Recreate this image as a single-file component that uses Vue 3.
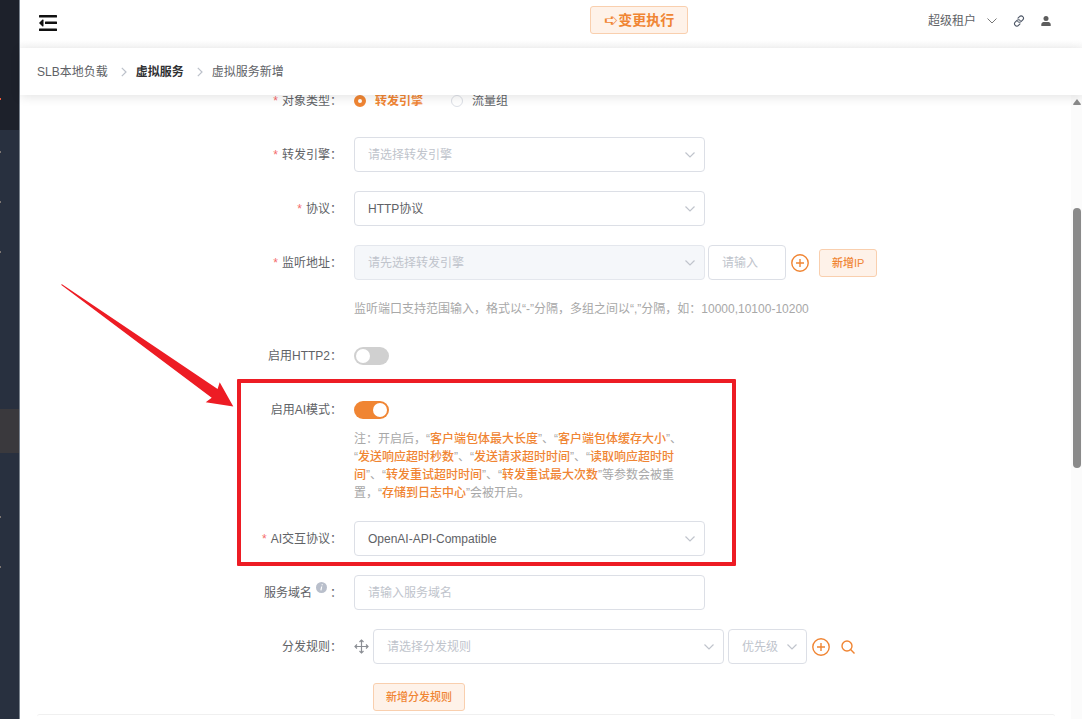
<script setup>
import { ref } from 'vue'

const objectType = ref('engine')
const engine = ref('')
const protocol = ref('HTTP')
const address = ref('')
const port = ref('')
const http2 = ref(false)
const aiMode = ref(true)
const aiProtocol = ref('openai')
const domain = ref('')
const rule = ref('')
const priority = ref('')
</script>

<template>
  <div class="page">
    <aside class="sidebar">
      <div class="brand"><i class="mark hot"></i></div>
      <div class="item"><i class="mark"></i></div>
      <div class="item"><i class="mark"></i></div>
      <div class="item"><i class="mark"></i></div>
      <div class="item active"></div>
      <div class="item after"><i class="mark"></i></div>
      <div class="item"><i class="mark"></i></div>
    </aside>

    <div class="main">
      <header class="topbar">
        <button class="plain" type="button" aria-label="menu">
          <svg width="18" height="17" viewBox="0 0 18 17" fill="#111">
            <rect width="18" height="2.400" rx=".5" /><rect x="6" y="6.600" width="12" height="2.400" rx=".5" /><rect y="13.600" width="18" height="2.400" rx=".5" />
            <path d="M0 8l3.500-3.400q1-.6 1 .6v5.600q0 1.200-1 .6z" />
          </svg>
        </button>
        <button class="btn run" type="button"><span class="arrow-glyph">➪</span>变更执行</button>
        <div class="tools">
          <button class="plain tenant" type="button">
            超级租户
            <svg width="10" height="6" viewBox="0 0 10 6" fill="none" stroke="#777"><path d="M.5.5L5 5 9.500.5" /></svg>
          </button>
          <button class="plain" type="button" aria-label="link">
            <svg width="12" height="12" viewBox="0 0 12 12" fill="none" stroke="#4c5565" stroke-width="1.100" stroke-linecap="round">
              <path d="M5 3.200l1.500-1.600a2.200 2.200 0 0 1 3.300 0 2.300 2.300 0 0 1 0 3.200L8 6.700a2.200 2.200 0 0 1-3.200-.2" />
              <path d="M7 8.800l-1.500 1.600a2.200 2.200 0 0 1-3.300 0 2.300 2.300 0 0 1 0-3.200L4 5.300a2.200 2.200 0 0 1 3.200.2" />
            </svg>
          </button>
          <button class="plain" type="button" aria-label="user">
            <svg width="10" height="10" viewBox="0 0 10 10" fill="#5d5d5d">
              <circle cx="5" cy="2.500" r="2.500" /><path d="M.3 10V8.500C.3 6.500 2 6 3.500 6h3c1.500 0 3.200.5 3.200 2.500V10z" />
            </svg>
          </button>
        </div>
      </header>

      <nav class="crumbs">
        <a href="#">SLB本地负载</a>
        <svg width="6" height="10" viewBox="0 0 6 10" fill="none" stroke="#bcc1ca" stroke-width="1.200"><path d="M.8.8L5 5 .8 9.200" /></svg>
        <a href="#" class="strong">虚拟服务</a>
        <svg width="6" height="10" viewBox="0 0 6 10" fill="none" stroke="#bcc1ca" stroke-width="1.200"><path d="M.8.8L5 5 .8 9.200" /></svg>
        <span>虚拟服务新增</span>
      </nav>

      <div class="body">
        <form class="form" @submit.prevent>
          <div class="row">
            <span class="label req">对象类型：</span>
            <div class="line radios">
              <label><input v-model="objectType" type="radio" name="type" value="engine" /><span>转发引擎</span></label>
              <label><input v-model="objectType" type="radio" name="type" value="group" /><span>流量组</span></label>
            </div>
          </div>

          <div class="row">
            <label class="label req" for="engine">转发引擎：</label>
            <div class="line">
              <div class="select wide">
                <select id="engine" v-model="engine" class="empty"><option value="">请选择转发引擎</option></select>
                <svg class="chev" width="10" height="6" viewBox="0 0 10 6"><path d="M.5.5L5 5 9.500.5" /></svg>
              </div>
            </div>
          </div>

          <div class="row">
            <label class="label req" for="protocol">协议：</label>
            <div class="line">
              <div class="select wide">
                <select id="protocol" v-model="protocol"><option value="HTTP">HTTP协议</option></select>
                <svg class="chev" width="10" height="6" viewBox="0 0 10 6"><path d="M.5.5L5 5 9.500.5" /></svg>
              </div>
            </div>
          </div>

          <div class="row">
            <label class="label req" for="address">监听地址：</label>
            <div>
              <div class="line">
                <div class="select wide">
                  <select id="address" v-model="address" class="empty" disabled><option value="">请先选择转发引擎</option></select>
                  <svg class="chev" width="10" height="6" viewBox="0 0 10 6"><path d="M.5.5L5 5 9.500.5" /></svg>
                </div>
                <input v-model="port" class="text port" type="text" placeholder="请输入" aria-label="端口" />
                <button class="plain add" type="button" aria-label="add">
                  <svg width="18" height="18" viewBox="0 0 18 18" class="stroke"><circle cx="9" cy="9" r="8.200" /><path d="M5 9h8M9 5v8" /></svg>
                </button>
                <button class="btn small new-ip" type="button">新增IP</button>
              </div>
              <p class="help">监听端口支持范围输入，格式以“-”分隔，多组之间以“,”分隔，如：10000,10100-10200</p>
            </div>
          </div>

          <div class="row">
            <label class="label" for="http2">启用HTTP2：</label>
            <div class="line"><input id="http2" v-model="http2" class="switch" type="checkbox" role="switch" /></div>
          </div>

          <div class="row">
            <label class="label" for="ai">启用AI模式：</label>
            <div>
              <div class="line"><input id="ai" v-model="aiMode" class="switch" type="checkbox" role="switch" /></div>
              <p class="note">
                注：开启后，“<b>客户端包体最大长度</b>”、“<b>客户端包体缓存大小</b>”、<br />
                “<b>发送响应超时秒数</b>”、“<b>发送请求超时时间</b>”、“<b>读取响应超时时</b><br />
                <b>间</b>”、“<b>转发重试超时时间</b>”、“<b>转发重试最大次数</b>”等参数会被重<br />
                置，“<b>存储到日志中心</b>”会被开启。
              </p>
            </div>
          </div>

          <div class="row">
            <label class="label req" for="aiproto">AI交互协议：</label>
            <div class="line">
              <div class="select wide">
                <select id="aiproto" v-model="aiProtocol"><option value="openai">OpenAI-API-Compatible</option></select>
                <svg class="chev" width="10" height="6" viewBox="0 0 10 6"><path d="M.5.5L5 5 9.500.5" /></svg>
              </div>
            </div>
          </div>

          <div class="row">
            <label class="label" for="domain">服务域名<svg class="info" width="11" height="11" viewBox="0 0 11 11"><circle cx="5.500" cy="5.500" r="5.500" fill="#b9bfcb" /><path d="M6.200 2.200v1M5.700 4.500L4.900 8.300" stroke="#fff" stroke-width="1.200" /></svg>：</label>
            <div class="line"><input id="domain" v-model="domain" class="text wide" type="text" placeholder="请输入服务域名" /></div>
          </div>

          <div class="row">
            <label class="label" for="rule">分发规则：</label>
            <div>
              <div class="line">
                <svg class="move" width="15" height="15" viewBox="0 0 15 15" fill="none" stroke="#8b8e94" stroke-width="1.200">
                  <path d="M7.500 1v13M1 7.500h13" />
                  <path d="M5.500 3l2-2 2 2M5.500 12l2 2 2-2M3 5.500l-2 2 2 2M12 5.500l2 2-2 2" />
                </svg>
                <div class="select wide">
                  <select id="rule" v-model="rule" class="empty"><option value="">请选择分发规则</option></select>
                  <svg class="chev" width="10" height="6" viewBox="0 0 10 6"><path d="M.5.5L5 5 9.500.5" /></svg>
                </div>
                <div class="select priority">
                  <select v-model="priority" class="empty" aria-label="优先级"><option value="">优先级</option></select>
                  <svg class="chev" width="10" height="6" viewBox="0 0 10 6"><path d="M.5.5L5 5 9.500.5" /></svg>
                </div>
                <button class="plain add" type="button" aria-label="add">
                  <svg width="18" height="18" viewBox="0 0 18 18" class="stroke"><circle cx="9" cy="9" r="8.200" /><path d="M5 9h8M9 5v8" /></svg>
                </button>
                <button class="plain search" type="button" aria-label="search">
                  <svg width="14" height="14" viewBox="0 0 14 14" class="stroke"><circle cx="6" cy="6" r="5" /><path d="M9.600 9.600l3.900 3.900" /></svg>
                </button>
              </div>
              <button class="btn small new-rule" type="button">新增分发规则</button>
            </div>
          </div>
          <div class="next-panel"></div>
        </form>

        <div class="scroll">
          <svg width="8" height="6" viewBox="0 0 8 6"><path d="M4 0L8 5.200Q8 6 7 6H1Q0 6 0 5.200z" fill="#8a8a8a" /></svg>
          <div class="thumb"></div>
        </div>
      </div>
    </div>

    <div class="highlight"></div>
    <svg class="pointer" width="174" height="125" viewBox="0 0 174 125">
      <path d="M0 .8L1 .2 156.600 105 158.700 98.300 172.300 122.500 144.700 118.300 150.700 113.700z" fill="#ed1c24" />
    </svg>
  </div>
</template>

<style>
body {
  margin: 0;
  overflow: hidden;
}
</style>

<style scoped>
* {
  box-sizing: border-box;
}
.page {
  position: relative;
  display: flex;
  height: 100vh;
  overflow: hidden;
  background: #fff;
  color: #606266;
  font: 12px/18px "Liberation Sans", "Noto Sans CJK SC", sans-serif;
}
button, input, select {
  font: inherit;
  color: inherit;
}
svg {
  display: block;
}

.sidebar {
  flex: 0 0 20px;
  display: flex;
  flex-direction: column;
  gap: 6px;
  background: #28303f;
  border-right: 1px solid #7b848f;
}
.brand {
  height: 130px;
  margin-bottom: -6px;
  padding-top: 98px;
  background: #1d212b;
  flex: none;
}
.item {
  flex: none;
  height: 44px;
  display: flex;
  align-items: center;
}
.item.active {
  margin-top: 129px;
  background: #3a393d;
}
.item.after {
  margin-top: 36px;
}
.mark {
  display: block;
  width: 1px;
  height: 2px;
  background: #7d7673;
}
.mark.hot {
  background: #f0583a;
}

.main {
  flex: 1;
  min-width: 0;
  display: flex;
  flex-direction: column;
}
.topbar {
  flex: 0 0 48px;
  display: grid;
  grid-template-columns: 551px auto 1fr;
  align-items: start;
  padding: 0 31px 0 19px;
  background: linear-gradient(#fff 40px, #f9f9f9);
}
.topbar > .plain {
  margin-top: 15px;
  justify-self: start;
}
.plain {
  border: 0;
  padding: 0;
  background: none;
}
.btn {
  border: 1px solid #f9cfae;
  border-radius: 3px;
  background: #fef2e9;
  color: #f08533;
  font-weight: 500;
}
.run {
  height: 28px;
  margin-top: 6px;
  padding: 0 13px;
  display: flex;
  align-items: center;
  font-size: 14px;
  font-weight: 700;
}
.arrow-glyph {
  font-family: "DejaVu Sans", sans-serif;
  font-size: 17px;
  font-weight: 400;
}
.tools {
  display: flex;
  justify-content: flex-end;
  align-items: center;
  gap: 16px;
  height: 42px;
}
.tenant {
  display: flex;
  align-items: center;
  gap: 11px;
}

.crumbs {
  position: relative;
  z-index: 1;
  flex: 0 0 47px;
  display: flex;
  align-items: center;
  gap: 9px;
  padding-left: 17px;
  background: #fff;
  box-shadow: 0 2px 10px rgba(0, 0, 0, 0.11);
}
.crumbs a {
  color: inherit;
  text-decoration: none;
}
.crumbs svg {
  margin-left: 4px;
}
.crumbs .strong {
  color: #303133;
  font-weight: 700;
}

.body {
  flex: 1;
  min-height: 0;
  display: flex;
  overflow: hidden;
}
.form {
  flex: 1;
  display: flex;
  flex-direction: column;
  gap: 19px;
  margin-top: -12px;
}
.row {
  display: grid;
  grid-template-columns: 322px 1fr;
  column-gap: 12px;
}
.label {
  display: flex;
  justify-content: flex-end;
  align-items: center;
  height: 35px;
}
.req::before {
  content: "*";
  margin-right: 4px;
  color: #f56c6c;
}
.info {
  margin: -10px 3px 0 4px;
}
.line {
  display: flex;
  align-items: center;
  height: 35px;
}
.radios {
  gap: 28px;
}
.radios label {
  display: flex;
  align-items: center;
  gap: 9px;
}
.radios input {
  appearance: none;
  width: 12px;
  height: 12px;
  margin: 0;
  border: 1px solid #dcdfe6;
  border-radius: 50%;
}
.radios input:checked {
  border: 4px solid #f08533;
}
.radios input:checked + span {
  color: #f08533;
  font-weight: 700;
}
.wide {
  width: 351px;
}
.select {
  position: relative;
}
select, .text {
  height: 35px;
  padding: 0 13px;
  border: 1px solid #dcdfe6;
  border-radius: 4px;
  background: #fff;
  outline: 0;
}
select {
  appearance: none;
  display: block;
  width: 100%;
  opacity: 1;
}
select:disabled {
  background: #f5f7fa;
  border-color: #e4e7ed;
}
.empty, .text::placeholder {
  color: #c0c4cc;
}
.chev {
  position: absolute;
  right: 10px;
  top: 15px;
  fill: none;
  stroke: #c0c4cc;
  stroke-width: 1.2;
  pointer-events: none;
}
.port {
  width: 78px;
  margin-left: 3px;
}
.add {
  margin-left: 5px;
}
.search {
  margin-left: 11px;
}
.stroke {
  fill: none;
  stroke: #f08533;
  stroke-width: 1.4;
}
.small {
  height: 28px;
  padding: 0 12px;
  font-size: 11px;
}
.new-ip {
  margin-left: 10px;
}
.help {
  margin: 0;
  padding-top: 19px;
  line-height: 20px;
  color: #a8a8a8;
}
.switch {
  appearance: none;
  display: flex;
  width: 35px;
  height: 18px;
  margin: 0;
  padding: 2px;
  border-radius: 9px;
  background: #d0d0d0;
}
.switch::before {
  content: "";
  width: 14px;
  height: 14px;
  border-radius: 50%;
  background: #fff;
}
.switch:checked {
  justify-content: flex-end;
  background: #f08533;
}
.note {
  margin: 3px 0 0;
  color: #a8a8a8;
}
.note b {
  color: #f08533;
  font-weight: 500;
}
.move {
  margin-right: 4px;
}
.priority {
  width: 79px;
  margin-left: 4px;
}
.new-rule {
  margin: 19px 0 0 19px;
}
.next-panel {
  height: 20px;
  margin: -16px 16px 0 17px;
  border-top: 1px solid #f0f0f0;
  border-radius: 4px;
}
.scroll {
  flex: 0 0 11px;
  display: flex;
  flex-direction: column;
  align-items: center;
  padding-top: 4px;
  background: #fbfbfb;
}
.thumb {
  width: 8px;
  height: 260px;
  margin-top: 103px;
  border-radius: 4px;
  background: #8a8a8a;
}

.highlight {
  position: absolute;
  z-index: 2;
  left: 237px;
  top: 379px;
  width: 499px;
  height: 187px;
  border: 4px solid #ed1c24;
  border-radius: 1px;
  pointer-events: none;
}
.pointer {
  position: absolute;
  z-index: 2;
  left: 61px;
  top: 284px;
  overflow: visible;
  pointer-events: none;
}
</style>
